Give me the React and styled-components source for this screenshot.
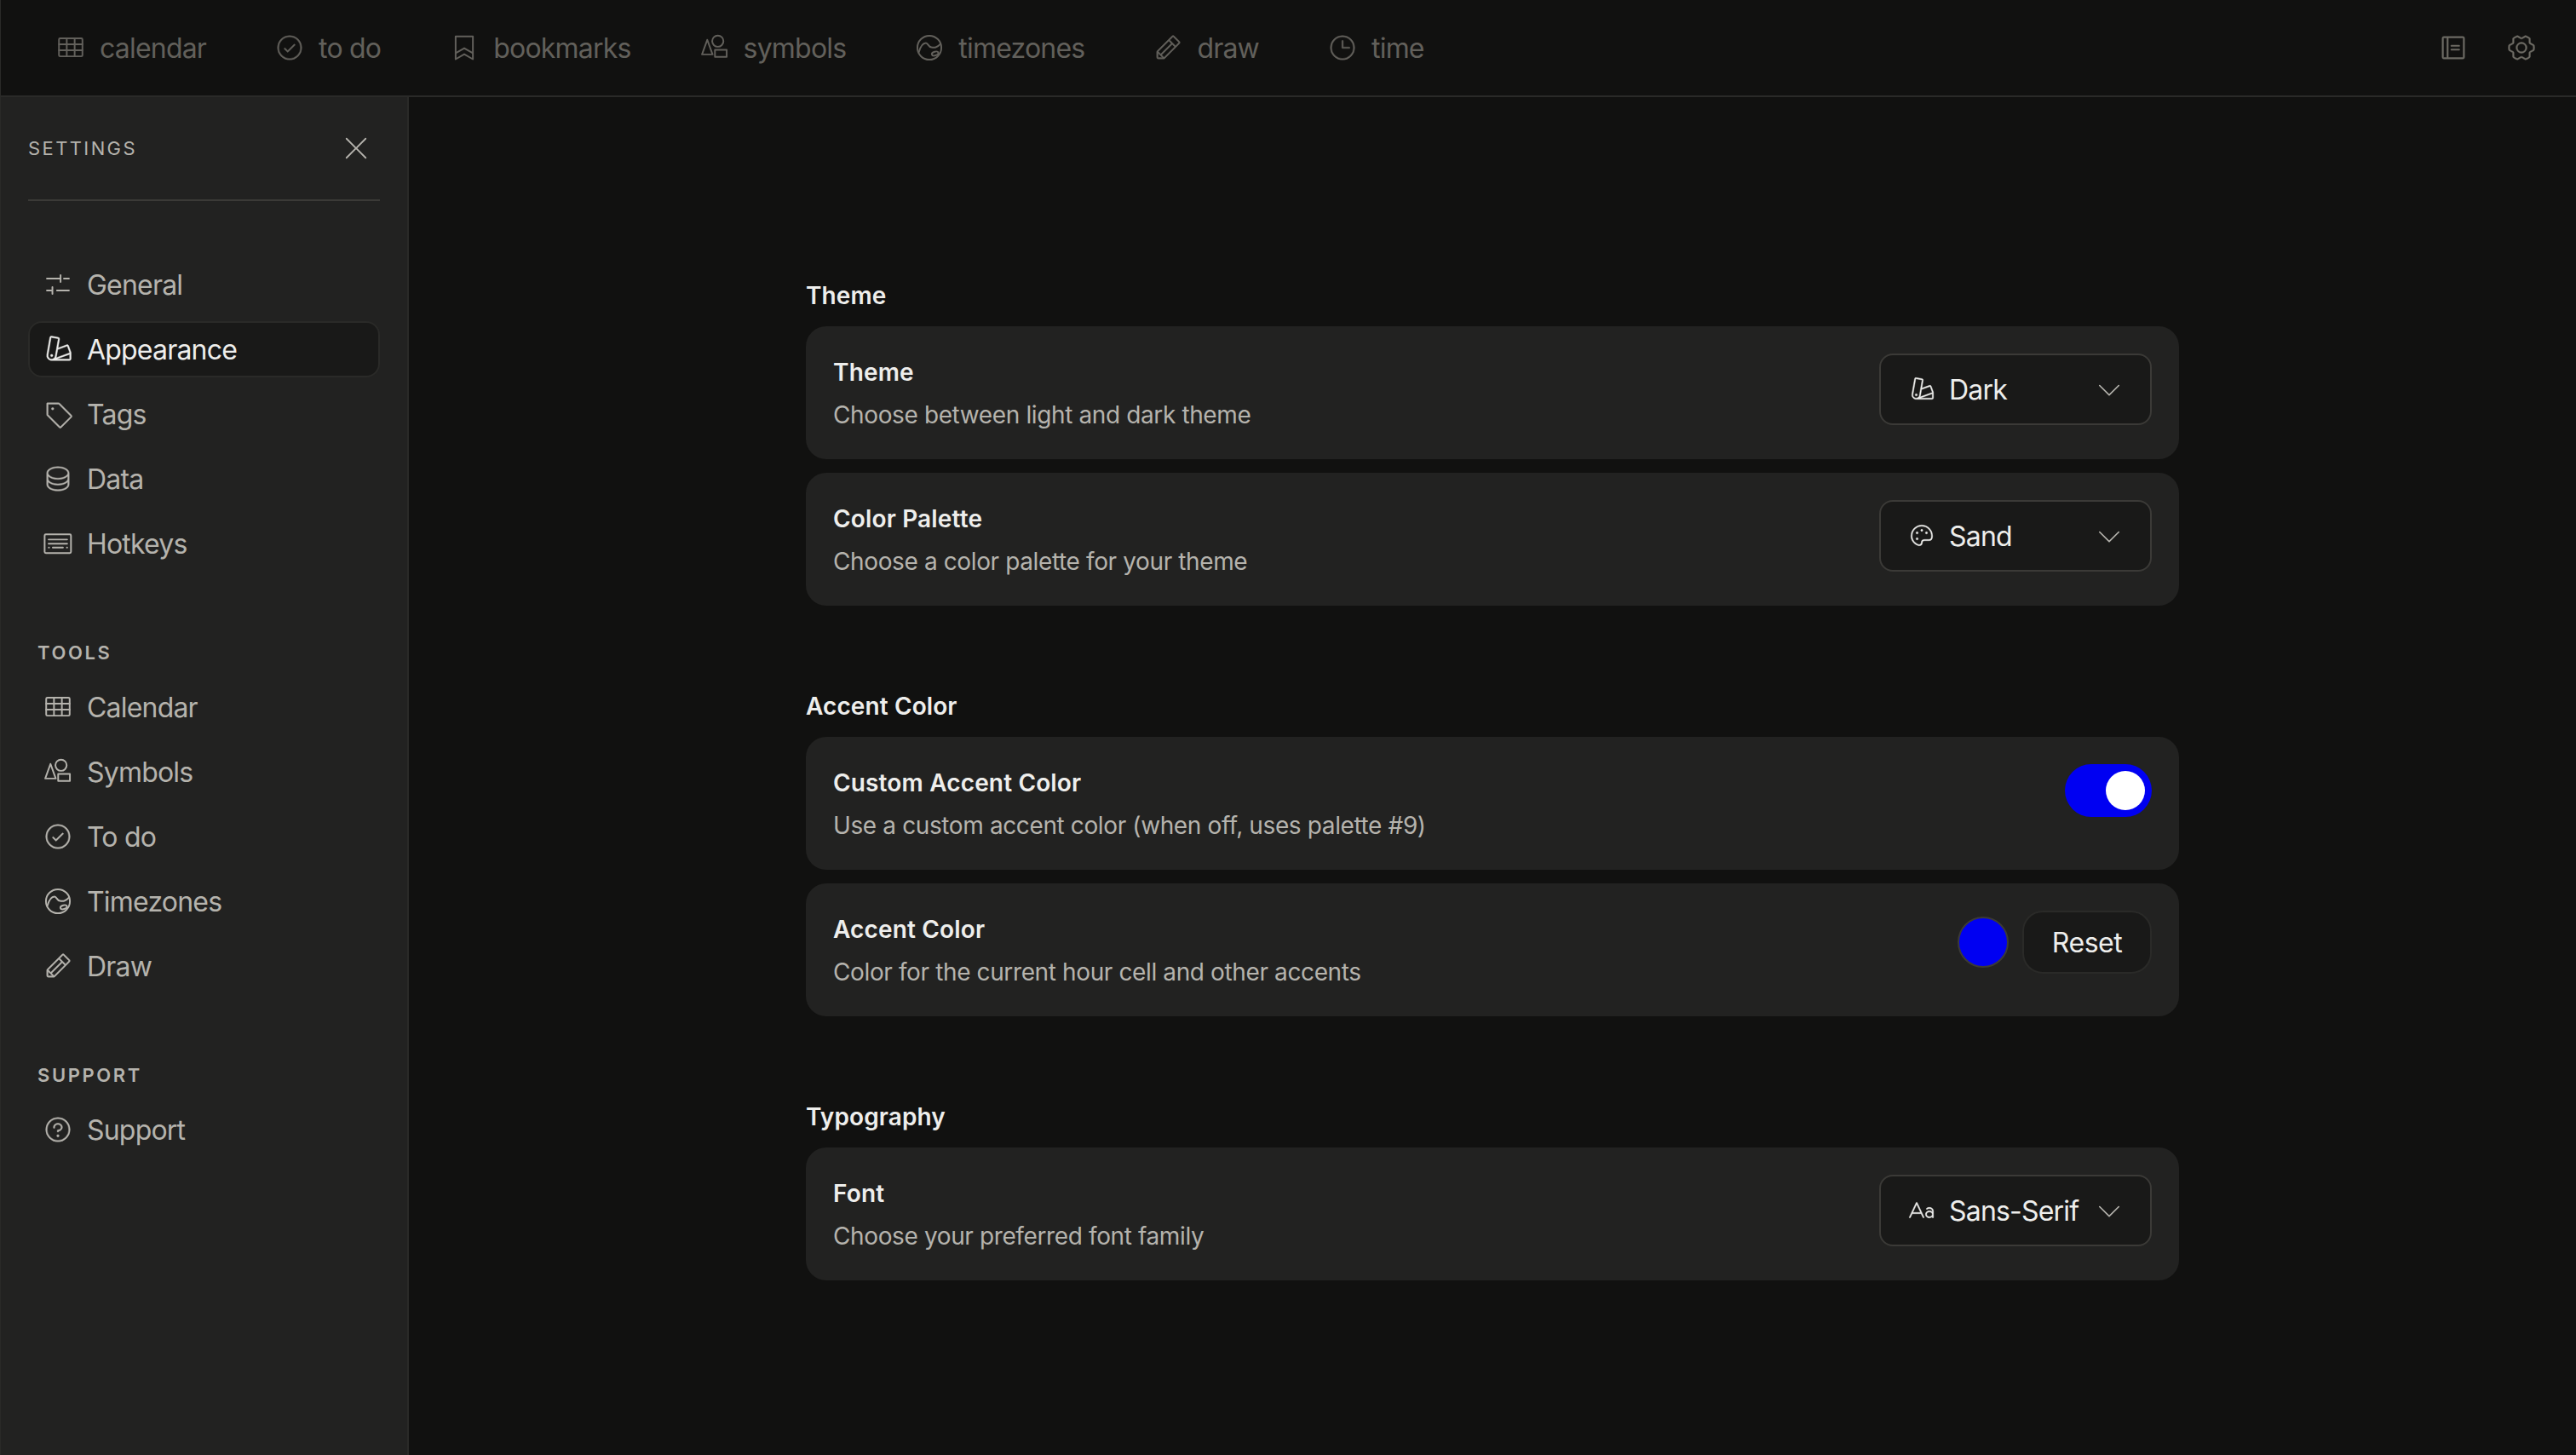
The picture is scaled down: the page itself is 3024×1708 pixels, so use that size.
import React from "react";
import styled, { createGlobalStyle } from "styled-components";
import {
  PiCheckCircleLight,
  PiPencilLight,
  PiClockLight,
  PiNotebookLight,
  PiGearSixLight,
  PiXLight,
  PiSwatchesLight,
  PiTagLight,
  PiDatabaseLight,
  PiQuestionLight,
  PiPaletteLight,
  PiTextAaLight,
  PiCaretDownLight,
} from "react-icons/pi";

// the light phosphor set is a touch thinner than the picture
const thicker = (Icon) => styled(Icon)`
  stroke-width: 3;
`;

const CheckIcon = thicker(PiCheckCircleLight);
const PencilIcon = thicker(PiPencilLight);
const ClockIcon = thicker(PiClockLight);
const NotebookIcon = thicker(PiNotebookLight);
const GearIcon = thicker(PiGearSixLight);
const SwatchesIcon = thicker(PiSwatchesLight);
const TagIcon = thicker(PiTagLight);
const DatabaseIcon = thicker(PiDatabaseLight);
const QuestionIcon = thicker(PiQuestionLight);
const PaletteIcon = thicker(PiPaletteLight);
const TextIcon = thicker(PiTextAaLight);

function LineIcon({ size, children }) {
  return (
    <svg width={size} height={size} viewBox="0 0 256 256" fill="none" stroke="currentColor" strokeWidth="14" strokeLinejoin="round" strokeLinecap="round">
      {children}
    </svg>
  );
}

function BookmarksIcon({ size }) {
  return (
    <LineIcon size={size}>
      <path d="M56 34H200V224L128 182L56 224Z" />
      <path d="M56 174L128 132L200 174" />
    </LineIcon>
  );
}

function GridIcon({ size }) {
  return (
    <LineIcon size={size}>
      <rect x="30" y="50" width="196" height="150" rx="10" />
      <path d="M95 50V200M161 50V200M30 100H226M30 150H226" />
    </LineIcon>
  );
}

function ShapesIcon({ size }) {
  return (
    <LineIcon size={size}>
      <path d="M66 62L22 184H110Z" />
      <circle cx="154" cy="73" r="47" />
      <rect x="130" y="146" width="98" height="58" />
    </LineIcon>
  );
}

function GlobeIcon({ size }) {
  return (
    <LineIcon size={size}>
      <circle cx="128" cy="128" r="100" />
      <path d="M40 165C50 130 70 90 99 89C118 88 118 122 145 125C170 128 190 130 222 95" />
      <ellipse cx="176" cy="177" rx="28" ry="16" transform="rotate(-15 176 177)" />
    </LineIcon>
  );
}

function FadersIcon({ size }) {
  return (
    <LineIcon size={size}>
      <path d="M36 78H146M150 50V106M178 78H220" />
      <path d="M36 178H70M82 150V206M120 178H220" />
    </LineIcon>
  );
}

function KeysIcon({ size }) {
  return (
    <LineIcon size={size}>
      <rect x="17" y="52" width="220" height="156" rx="10" />
      <path d="M50 95H205M50 130H205M85 162H170M52 162H54M203 162H205" />
    </LineIcon>
  );
}

const topItems = [
  { label: "calendar", icon: GridIcon },
  { label: "to do", icon: CheckIcon },
  { label: "bookmarks", icon: BookmarksIcon },
  { label: "symbols", icon: ShapesIcon },
  { label: "timezones", icon: GlobeIcon },
  { label: "draw", icon: PencilIcon },
  { label: "time", icon: ClockIcon },
];

const settingsItems = [
  { label: "General", icon: FadersIcon },
  { label: "Appearance", icon: SwatchesIcon, active: true },
  { label: "Tags", icon: TagIcon },
  { label: "Data", icon: DatabaseIcon },
  { label: "Hotkeys", icon: KeysIcon },
];

const toolItems = [
  { label: "Calendar", icon: GridIcon },
  { label: "Symbols", icon: ShapesIcon },
  { label: "To do", icon: CheckIcon },
  { label: "Timezones", icon: GlobeIcon },
  { label: "Draw", icon: PencilIcon },
];

function NavList({ items }) {
  return (
    <NavRows>
      {items.map((item) => (
        <NavRow key={item.label} $active={item.active}>
          <item.icon size={36} />
          {item.label}
        </NavRow>
      ))}
    </NavRows>
  );
}

function SettingCard({ title, description, children }) {
  return (
    <Card>
      <CardText>
        <CardTitle>{title}</CardTitle>
        <CardDescription>{description}</CardDescription>
      </CardText>
      <CardControls>{children}</CardControls>
    </Card>
  );
}

function SelectBox({ icon: Icon, value }) {
  return (
    <Select>
      <Icon size={32} />
      <SelectValue>{value}</SelectValue>
      <Chevron>
        <PiCaretDownLight size={36} />
      </Chevron>
    </Select>
  );
}

export default function App() {
  return (
    <>
      <GlobalStyle />
      <Page>
        <TopBar>
          <TopNav>
            {topItems.map((item) => (
              <TopItem key={item.label}>
                <item.icon size={36} />
                {item.label}
              </TopItem>
            ))}
          </TopNav>
          <TopActions>
            <NotebookIcon size={36} />
            <GearIcon size={36} />
          </TopActions>
        </TopBar>
        <Body>
          <Sidebar>
            <SidebarHead>
              <SidebarTitle>SETTINGS</SidebarTitle>
              <CloseButton>
                <PiXLight size={40} />
              </CloseButton>
            </SidebarHead>
            <FirstGroup>
              <NavList items={settingsItems} />
            </FirstGroup>
            <Group>
              <GroupLabel>TOOLS</GroupLabel>
              <NavList items={toolItems} />
            </Group>
            <Group>
              <GroupLabel>SUPPORT</GroupLabel>
              <NavList items={[{ label: "Support", icon: QuestionIcon }]} />
            </Group>
          </Sidebar>
          <Main>
            <Content>
              <Section>
                <SectionTitle>Theme</SectionTitle>
                <SettingCard title="Theme" description="Choose between light and dark theme">
                  <SelectBox icon={SwatchesIcon} value="Dark" />
                </SettingCard>
                <SettingCard title="Color Palette" description="Choose a color palette for your theme">
                  <SelectBox icon={PaletteIcon} value="Sand" />
                </SettingCard>
              </Section>
              <Section>
                <SectionTitle>Accent Color</SectionTitle>
                <SettingCard title="Custom Accent Color" description="Use a custom accent color (when off, uses palette #9)">
                  <Toggle>
                    <ToggleThumb />
                  </Toggle>
                </SettingCard>
                <SettingCard title="Accent Color" description="Color for the current hour cell and other accents">
                  <ColorDot />
                  <ResetButton>Reset</ResetButton>
                </SettingCard>
              </Section>
              <Section>
                <SectionTitle>Typography</SectionTitle>
                <SettingCard title="Font" description="Choose your preferred font family">
                  <SelectBox icon={TextIcon} value="Sans-Serif" />
                </SettingCard>
              </Section>
            </Content>
          </Main>
        </Body>
      </Page>
    </>
  );
}

const GlobalStyle = createGlobalStyle`
  * {
    box-sizing: border-box;
  }
  body {
    margin: 0;
    background: #111110;
    font-family: Inter, "Liberation Sans", sans-serif;
  }
`;

const Page = styled.div`
  height: 1708px;
  display: flex;
  flex-direction: column;
  overflow: hidden;
  background: #111110;
  border-left: 1px solid #2a2a28;
`;

const TopBar = styled.header`
  height: 114px;
  flex-shrink: 0;
  display: flex;
  align-items: center;
  justify-content: space-between;
  padding: 0 46px 0 64px;
  border-bottom: 2px solid #2a2a28;
`;

const TopNav = styled.nav`
  display: flex;
  align-items: center;
  gap: 80px;
`;

const TopItem = styled.div`
  display: flex;
  align-items: center;
  gap: 16px;
  font-size: 32px;
  letter-spacing: -0.8px;
  color: #62605b;
`;

const TopActions = styled.div`
  display: flex;
  align-items: center;
  gap: 44px;
  color: #6f6d66;
`;

const Body = styled.div`
  flex: 1;
  display: flex;
  min-height: 0;
`;

const Sidebar = styled.aside`
  width: 479px;
  flex-shrink: 0;
  padding: 0 32px;
  background: #222221;
  border-right: 2px solid #2a2a28;
`;

const SidebarHead = styled.div`
  height: 122px;
  display: flex;
  align-items: center;
  justify-content: space-between;
  padding-right: 8px;
  border-bottom: 2px solid #3b3a37;
`;

const SidebarTitle = styled.div`
  font-size: 22px;
  letter-spacing: 2.4px;
  color: #b5b3ad;
`;

const CloseButton = styled.div`
  display: flex;
  color: #b5b3ad;
`;

const FirstGroup = styled.div`
  margin-top: 65px;
`;

const Group = styled.div`
  margin-top: 80px;
`;

const GroupLabel = styled.div`
  height: 30px;
  line-height: 30px;
  margin: 0 0 16px 11px;
  font-size: 22px;
  font-weight: 600;
  letter-spacing: 2.6px;
  color: #b5b3ad;
`;

const NavRows = styled.div`
  display: flex;
  flex-direction: column;
  gap: 10px;
`;

const NavRow = styled.div`
  height: 66px;
  display: flex;
  align-items: center;
  gap: 16px;
  padding: 0 15px;
  font-size: 32px;
  letter-spacing: -0.8px;
  border-radius: 16px;
  border: 2px solid ${(props) => (props.$active ? "#2a2a28" : "transparent")};
  background: ${(props) => (props.$active ? "#191918" : "transparent")};
  color: ${(props) => (props.$active ? "#eeeeec" : "#b5b3ad")};
`;

const Main = styled.main`
  flex: 1;
  display: flex;
  justify-content: center;
  padding-top: 215px;
`;

const Content = styled.div`
  width: 1612px;
  display: flex;
  flex-direction: column;
  gap: 100px;
`;

const Section = styled.section`
  display: flex;
  flex-direction: column;
  gap: 16px;
`;

const SectionTitle = styled.h2`
  margin: 0 0 2px;
  font-size: 28px;
  line-height: 36px;
  font-weight: 600;
  letter-spacing: 0.1px;
  color: #eeeeec;
`;

const Card = styled.div`
  display: flex;
  align-items: flex-start;
  justify-content: space-between;
  padding: 32px;
  border-radius: 24px;
  background: #222221;
`;

const CardText = styled.div`
  display: flex;
  flex-direction: column;
  gap: 8px;
`;

const CardTitle = styled.div`
  font-size: 28px;
  line-height: 44px;
  font-weight: 600;
  letter-spacing: 0.15px;
  color: #eeeeec;
`;

const CardDescription = styled.div`
  font-size: 28px;
  line-height: 40px;
  letter-spacing: -0.38px;
  color: #b5b3ad;
`;

const CardControls = styled.div`
  display: flex;
  align-items: center;
  gap: 16px;
`;

const Select = styled.div`
  width: 320px;
  height: 84px;
  display: flex;
  align-items: center;
  gap: 16px;
  padding: 0 30px 0 32px;
  border-radius: 16px;
  border: 2px solid #3b3a37;
  background: #191918;
  color: #eeeeec;
`;

const SelectValue = styled.span`
  font-size: 32px;
  letter-spacing: -0.8px;
  white-space: nowrap;
`;

const Chevron = styled.span`
  display: flex;
  margin-left: auto;
  color: #b5b3ad;
`;

const Toggle = styled.div`
  width: 102px;
  height: 62px;
  display: flex;
  align-items: center;
  justify-content: flex-end;
  padding-right: 8px;
  border-radius: 31px;
  background: #0000f2;
`;

const ToggleThumb = styled.div`
  width: 46px;
  height: 46px;
  border-radius: 50%;
  background: #ffffff;
`;

const ColorDot = styled.div`
  width: 60px;
  height: 60px;
  border-radius: 50%;
  border: 2px solid #3b3a37;
  background: #0000f2;
`;

const ResetButton = styled.div`
  width: 152px;
  height: 74px;
  display: flex;
  align-items: center;
  justify-content: center;
  font-size: 32px;
  letter-spacing: -0.5px;
  border-radius: 24px;
  border: 2px solid #2a2a28;
  background: #191918;
  color: #eeeeec;
`;
